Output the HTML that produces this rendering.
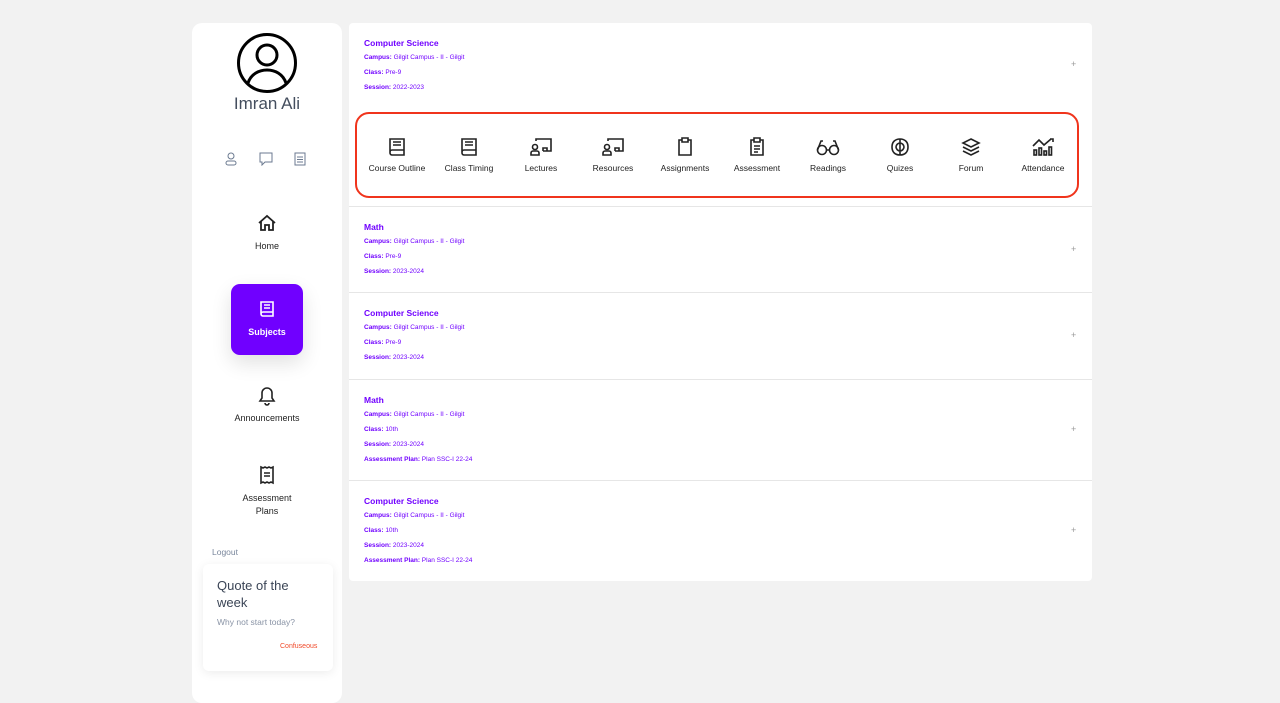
<!DOCTYPE html>
<html><head><meta charset="utf-8"><style>
*{box-sizing:border-box;margin:0;padding:0}
body{width:1280px;height:693px;background:#f2f2f2;font-family:"Liberation Sans",sans-serif;position:relative;overflow:hidden}
.side{position:absolute;left:192px;top:23px;width:150px;height:680px;background:#fff;border-radius:10px}
.abs{position:absolute}
.c{text-align:center}
.nav{position:absolute;left:0;width:150px;text-align:center;font-size:9px;color:#222}
.main{position:absolute;left:349px;top:23px;width:743px;height:558px;background:#fff;border-radius:4px}
.sec{position:absolute;left:0;width:743px;border-top:1px solid #e6e6e6}
.t{position:absolute;left:15px;color:#7000ff;font-size:8.5px;font-weight:bold}
.l{position:absolute;left:15px;color:#7000ff;font-size:6.5px}
.l b{font-weight:bold}
.plus{position:absolute;left:722px;color:#999;font-size:9px}
.red{position:absolute;left:6px;top:89px;width:724px;height:86px;border:2px solid #f0341c;border-radius:14px}
.it{position:absolute;top:114px;width:72px;text-align:center;font-size:8.5px;color:#222}
.it svg{display:block;margin:0 auto 6px}
</style></head><body>
<div class="side">
 <svg class="abs" style="left:44px;top:9px" width="62" height="62" viewBox="0 0 62 62" fill="none" stroke="#000" stroke-width="3"><circle cx="31" cy="31" r="28.5"/><circle cx="31" cy="23" r="10"/><path d="M12 51c3-9 11-13 19-13s16 4 19 13"/></svg>
 <div class="abs c" style="left:0;top:71px;width:150px;font-size:17px;color:#444e5e">Imran Ali</div>
 <svg class="abs" style="left:33px;top:129px" width="12" height="14" viewBox="0 0 12 14" fill="none" stroke="#6b7a90" stroke-width="1"><circle cx="6" cy="4" r="3"/><rect x="1" y="9" width="10" height="4" rx="2"/></svg>
 <svg class="abs" style="left:67px;top:129px" width="14" height="14" viewBox="0 0 14 14" fill="none" stroke="#6b7a90" stroke-width="1"><path d="M1 1h12v9H6l-3 3v-3H1z"/></svg>
 <svg class="abs" style="left:102px;top:129px" width="12" height="14" viewBox="0 0 12 14" fill="none" stroke="#6b7a90" stroke-width="1"><path d="M1 1h10v12H1z M3 5h6M3 7.5h6M3 10h6"/></svg>
 <svg class="abs" style="left:65px;top:191px" width="20" height="18" viewBox="0 0 20 18" fill="none" stroke="#222" stroke-width="1.8"><path d="M2 9L10 2l8 7M4 7v9h4v-5h4v5h4V7"/></svg>
 <div class="nav" style="top:218px">Home</div>
 <div class="abs" style="left:39px;top:261px;width:72px;height:71px;background:#7000ff;border-radius:9px;box-shadow:0 8px 20px rgba(0,0,0,.12)"></div>
 <svg class="abs" style="left:67px;top:277px" width="16" height="18" viewBox="0 0 16 18" fill="none" stroke="#fff" stroke-width="1.6"><path d="M2 2h12v14H4a2 2 0 0 1-2-2z M2 14a2 2 0 0 1 2-2h10M5 5h6M5 8h6"/></svg>
 <div class="nav" style="top:304px;color:#fff;font-weight:bold">Subjects</div>
 <svg class="abs" style="left:66px;top:363px" width="18" height="20" viewBox="0 0 18 20" fill="none" stroke="#222" stroke-width="1.6"><path d="M9 2a5 5 0 0 0-5 5v5l-2 3h14l-2-3V7a5 5 0 0 0-5-5zM7 17a2 2 0 0 0 4 0"/></svg>
 <div class="nav" style="top:390px">Announcements</div>
 <svg class="abs" style="left:67px;top:442px" width="16" height="20" viewBox="0 0 16 20" fill="none" stroke="#222" stroke-width="1.6"><path d="M2 2l2 1 2-1 2 1 2-1 2 1 2-1v16l-2-1-2 1-2-1-2 1-2-1-2 1z M5 8h6M5 11h6"/></svg>
 <div class="nav" style="top:469px;line-height:13px">Assessment<br>Plans</div>
 <div class="abs" style="left:20px;top:524px;font-size:8.5px;color:#7a879c">Logout</div>
 <div class="abs" style="left:11px;top:541px;width:130px;height:107px;background:#fff;border-radius:6px;box-shadow:0 2px 10px rgba(0,0,0,.08)"></div>
 <div class="abs" style="left:25px;top:554px;font-size:13px;line-height:17px;color:#3b4556">Quote of the<br>week</div>
 <div class="abs" style="left:25px;top:594px;font-size:8.5px;color:#8a94a6">Why not start today?</div>
 <div class="abs" style="left:88px;top:620px;font-size:7px;color:#f04a2a">Confuseous</div>
</div>
<div class="main">
 <div class="t" style="top:15px">Computer Science</div>
 <div class="l" style="top:31px"><b>Campus:</b> Gilgit Campus - II - Gilgit</div>
 <div class="l" style="top:46px"><b>Class:</b> Pre-9</div>
 <div class="l" style="top:61px"><b>Session:</b> 2022-2023</div>
 <div class="plus" style="top:36px">+</div>
 <div class="red"></div>
 <div class="it" style="left:12px"><svg width="18" height="20" viewBox="0 0 18 20" fill="none" stroke="#222" stroke-width="1.6"><path d="M2 2h14v16H4a2 2 0 0 1-2-2z M2 15a2 2 0 0 1 2-2h12M5 5h8M5 8h8"/></svg>Course Outline</div>
 <div class="it" style="left:84px"><svg width="18" height="20" viewBox="0 0 18 20" fill="none" stroke="#222" stroke-width="1.6"><path d="M2 2h14v16H4a2 2 0 0 1-2-2z M2 15a2 2 0 0 1 2-2h12M5 5h8M5 8h8"/></svg>Class Timing</div>
 <div class="it" style="left:156px"><svg width="24" height="20" viewBox="0 0 24 20" fill="none" stroke="#222" stroke-width="1.6"><path d="M7 4V2h15v12h-8M14 14v-3h4v3"/><circle cx="6" cy="10" r="2.5"/><path d="M2 18v-2a2 2 0 0 1 2-2h4a2 2 0 0 1 2 2v2z"/></svg>Lectures</div>
 <div class="it" style="left:228px"><svg width="24" height="20" viewBox="0 0 24 20" fill="none" stroke="#222" stroke-width="1.6"><path d="M7 4V2h15v12h-8M14 14v-3h4v3"/><circle cx="6" cy="10" r="2.5"/><path d="M2 18v-2a2 2 0 0 1 2-2h4a2 2 0 0 1 2 2v2z"/></svg>Resources</div>
 <div class="it" style="left:300px"><svg width="16" height="20" viewBox="0 0 16 20" fill="none" stroke="#222" stroke-width="1.6"><path d="M5 3H2v15h12V3h-3M5 1h6v4H5z"/></svg>Assignments</div>
 <div class="it" style="left:372px"><svg width="16" height="20" viewBox="0 0 16 20" fill="none" stroke="#222" stroke-width="1.6"><path d="M5 3H2v15h12V3h-3M5 1h6v4H5zM5 9h6M5 12h6M5 15h4"/></svg>Assessment</div>
 <div class="it" style="left:443px"><svg width="24" height="20" viewBox="0 0 24 20" fill="none" stroke="#222" stroke-width="1.6"><circle cx="6" cy="13" r="4.5"/><circle cx="18" cy="13" r="4.5"/><path d="M10.5 13h3M1.5 13L5 4h2M22.5 13L19 4h-2"/></svg>Readings</div>
 <div class="it" style="left:515px"><svg width="22" height="20" viewBox="0 0 22 20" fill="none" stroke="#222" stroke-width="1.6"><path d="M11 2c-5 0-8 3-8 8s3 8 8 8 8-3 8-8-3-8-8-8zM11 2v16M11 6c-2 0-4 2-4 4s2 4 4 4M11 6c2 0 4 2 4 4s-2 4-4 4"/></svg>Quizes</div>
 <div class="it" style="left:586px"><svg width="20" height="20" viewBox="0 0 20 20" fill="none" stroke="#222" stroke-width="1.6"><path d="M10 2l8 4-8 4-8-4zM2 10l8 4 8-4M2 14l8 4 8-4"/></svg>Forum</div>
 <div class="it" style="left:658px"><svg width="24" height="20" viewBox="0 0 24 20" fill="none" stroke="#222" stroke-width="1.6"><path d="M2 9l6-6 5 5 7-6M19 2h3v3"/><rect x="3" y="13" width="2.5" height="5"/><rect x="8" y="11" width="2.5" height="7"/><rect x="13" y="14" width="2.5" height="4"/><rect x="18" y="10" width="2.5" height="8"/></svg>Attendance</div>

 <div class="sec" style="top:183px;height:87px">
  <div class="t" style="top:15px">Math</div>
  <div class="l" style="top:31px"><b>Campus:</b> Gilgit Campus - II - Gilgit</div>
  <div class="l" style="top:46px"><b>Class:</b> Pre-9</div>
  <div class="l" style="top:61px"><b>Session:</b> 2023-2024</div>
  <div class="plus" style="top:37px">+</div>
 </div>
 <div class="sec" style="top:269px;height:87px">
  <div class="t" style="top:15px">Computer Science</div>
  <div class="l" style="top:31px"><b>Campus:</b> Gilgit Campus - II - Gilgit</div>
  <div class="l" style="top:46px"><b>Class:</b> Pre-9</div>
  <div class="l" style="top:61px"><b>Session:</b> 2023-2024</div>
  <div class="plus" style="top:37px">+</div>
 </div>
 <div class="sec" style="top:356px;height:101px">
  <div class="t" style="top:15px">Math</div>
  <div class="l" style="top:31px"><b>Campus:</b> Gilgit Campus - II - Gilgit</div>
  <div class="l" style="top:46px"><b>Class:</b> 10th</div>
  <div class="l" style="top:61px"><b>Session:</b> 2023-2024</div>
  <div class="l" style="top:76px"><b>Assessment Plan:</b> Plan SSC-I 22-24</div>
  <div class="plus" style="top:44px">+</div>
 </div>
 <div class="sec" style="top:457px;height:101px">
  <div class="t" style="top:15px">Computer Science</div>
  <div class="l" style="top:31px"><b>Campus:</b> Gilgit Campus - II - Gilgit</div>
  <div class="l" style="top:46px"><b>Class:</b> 10th</div>
  <div class="l" style="top:61px"><b>Session:</b> 2023-2024</div>
  <div class="l" style="top:76px"><b>Assessment Plan:</b> Plan SSC-I 22-24</div>
  <div class="plus" style="top:44px">+</div>
 </div>
</div>
</body></html>
